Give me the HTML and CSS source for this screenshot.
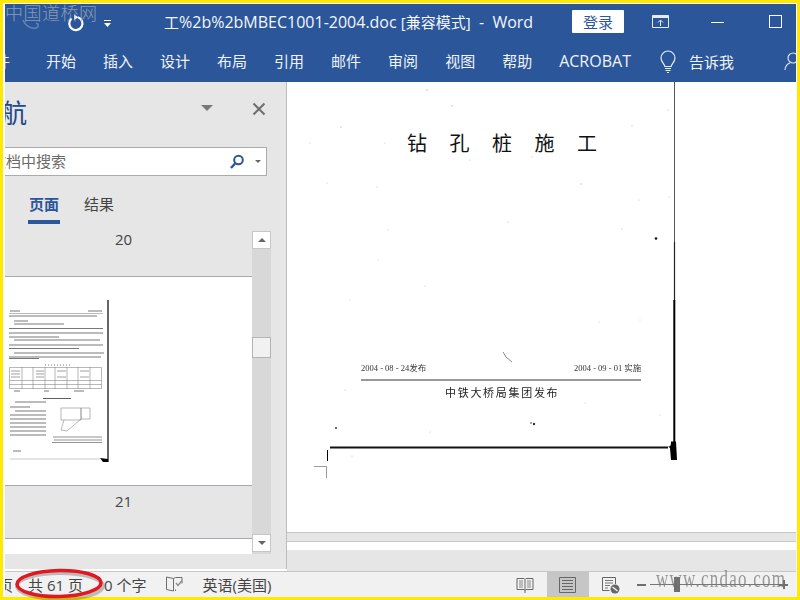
FILE: index.html
```html
<!DOCTYPE html>
<html lang="zh">
<head>
<meta charset="utf-8">
<title>Word</title>
<link rel="stylesheet" href="styles.css">
</head>
<body>
<div class="frame">
  <header class="titlebar">
    <svg class="ico-undo" width="20" height="20" viewBox="0 0 20 20"><path d="M5.500 5.500A6.600 6.600 0 1 0 12 4.200" fill="none" stroke="#fff" stroke-width="2.200"/><path d="M8 1.500l4.500 2.700L8 7z" fill="#fff"/></svg>
    <svg class="ico-qat" width="9" height="9" viewBox="0 0 9 9"><path d="M1 1.500h7" stroke="#fff" fill="none"/><path d="M1 4h7L4.500 8z" fill="#fff"/></svg>
    <div class="doc-title"><span class="cjk">工</span>%2b%2bMBEC1001-2004.doc <span class="cjk">[兼容模式]</span>&nbsp; -&nbsp; Word</div>
    <button class="login">登录</button>
    <svg class="ico-display" width="18" height="14" viewBox="0 0 18 14"><path d="M.5.500h16v12H.5z" fill="none" stroke="#e6ecf5"/><path d="M.5 2h16" stroke="#e6ecf5" stroke-width="2" fill="none"/><path d="M8.500 11V5.500M6 7.500l2.500-2.500 2.500 2.500" stroke="#e6ecf5" fill="none"/></svg>
    <span class="ico-min"></span>
    <span class="ico-max"></span>
  </header>
  <nav class="ribbon">
    <span class="tab tab-file">文件</span>
    <span class="tab">开始</span>
    <span class="tab">插入</span>
    <span class="tab">设计</span>
    <span class="tab">布局</span>
    <span class="tab">引用</span>
    <span class="tab">邮件</span>
    <span class="tab">审阅</span>
    <span class="tab">视图</span>
    <span class="tab">帮助</span>
    <span class="tab tab-latin">ACROBAT</span>
    <svg class="ico-bulb" width="18" height="24" viewBox="0 0 18 24"><path d="M5.800 16.500C5.500 13.500 2 12 2 8a7 7 0 0 1 14 0c0 4-3.500 5.500-3.800 8.500z" fill="none" stroke="#e6ecf5" stroke-width="1.200"/><path d="M6 18.500h6M6.500 20.500h5M8 22.500h2" stroke="#e6ecf5" stroke-width="1.200" fill="none"/></svg>
    <span class="tab tell">告诉我</span>
    <svg class="ico-person" width="16" height="20" viewBox="0 0 16 20"><circle cx="9" cy="6" r="5" fill="none" stroke="#d8e1ee" stroke-width="1.200"/><path d="M1 18c0-4 3-6.500 5-7" fill="none" stroke="#d8e1ee" stroke-width="1.200"/></svg>
  </nav>
  <main class="workspace">
    <aside class="nav">
      <div class="nav-head">
        <h1 class="nav-title">导航</h1>
        <span class="tri-down"></span>
        <svg class="ico-close" width="14" height="14" viewBox="0 0 14 14"><path d="M1.500 1.500l11 11M12.500 1.500l-11 11" stroke="#6e6e6e" stroke-width="2" fill="none"/></svg>
      </div>
      <div class="search">
        <span class="search-text">文档中搜索</span>
        <svg class="ico-search" width="16" height="16" viewBox="0 0 16 16"><circle cx="9.500" cy="6" r="4.300" fill="none" stroke="#2b579a" stroke-width="2"/><path d="M6.300 9.300L2 14" stroke="#2b579a" stroke-width="2.400" fill="none"/></svg>
        <span class="tri-small"></span>
      </div>
      <div class="nav-tabs">
        <span class="nav-tab active">页面</span>
        <span class="nav-tab">结果</span>
      </div>
      <div class="thumbs">
        <div class="thumb-list">
          <div class="page-num first">20</div>
          <div class="thumb-page">
            <svg class="thumb-img" width="104" height="163" viewBox="5 300 104 163">
              <rect x="5" y="300" width="104" height="163" fill="#fff"/>
              <g class="thumb-ink" stroke="#555" fill="none" stroke-width=".8">
                <path d="M10 311h10M88 311h14"/>
                <path d="M9 313.500h94" stroke="#aaa"/>
                <path d="M9 316h88M14 321h14M14 324h50M9 328.500h94M9 333h94M9 337h50M14 340h86M9 345h94M9 348.500h70M14 353h90M9 357h92M9 358.500h30"/>
                <path d="M45 365h25" stroke-dasharray="1 2"/>
                <path d="M9.500 367.500h92v21h-92zM9.500 380.500h92M9.500 384.500h92M22 367v22M33 367v22M45 367v22M55 367v22M67 367v22M78 367v22M90 367v22" stroke="#888" stroke-width=".6"/>
                <path d="M11 371h9M11 374h9M36 371h8M36 374h8M57 371h9M80 371h9M11 377h9M36 377h8M57 377h9M80 377h9" stroke="#888"/>
                <path d="M14 391h6M44 391h5M74 391h10"/>
                <path d="M43 398.500h28" stroke="#333"/>
                <path d="M15 402h31M10 407h20M15 411h31M10 415h36M10 419h36M10 423h36M10 427h36M10 431h36M10 435h36"/>
                <path d="M61 408h20v12H61zM81 408h9v11h-9zM64 420l-3 10 6 1 14-12" stroke="#888" stroke-width=".6"/>
                <path d="M53 437h49M54 440h48M52 442.500h50" stroke="#777"/>
                <path d="M13 451h8"/>
                <path d="M10 459h90" stroke="#bbb"/>
              </g>
              <path d="M108 300v162" stroke="#000" stroke-width="1.200"/>
              <path d="M100 458l8 1v3h-5z" fill="#000"/>
            </svg>
          </div>
          <div class="page-num second">21</div>
          <div class="thumb-next"></div>
        </div>
        <div class="scrollbar">
          <span class="sb-btn"><span class="tri-up"></span></span>
          <span class="sb-thumb"></span>
          <span class="sb-btn down"><span class="tri-small wide"></span></span>
        </div>
      </div>
    </aside>
    <section class="doc">
      <div class="scan">
        <svg class="scan-marks" width="513" height="450" viewBox="287 82 513 450">
          <path d="M674.500 82v160" stroke="#555" stroke-width="1" fill="none"/>
          <path d="M674.500 242v60" stroke="#222" stroke-width="1.200" fill="none"/>
          <path d="M674.300 300v145" stroke="#000" stroke-width="2" fill="none"/>
          <path d="M330 447.500C420 447 560 448 668 447.500" stroke="#111" stroke-width="2" fill="none"/>
          <path d="M668 446.500c3 0 3-2 3-5l5 0 1 18.500h-6l-1-12z" fill="#000"/>
          <path d="M327.500 450v11" stroke="#000" fill="none"/>
          <path d="M314 466.500h12.500V478" stroke="#9a9a9a" fill="none"/>
          <path d="M361 380h280" stroke="#333" stroke-width="1" fill="none"/>
          <path d="M503 352l3 5 6 5" stroke="#888" fill="none"/>
          <g fill="#bbb">
            <circle cx="656" cy="238.500" r="1.300" fill="#111"/>
            <circle cx="534" cy="424" r="1.200" fill="#333"/><circle cx="531" cy="423" r=".8" fill="#333"/>
            <circle cx="336" cy="428" r="1" fill="#333"/>
            <circle cx="427" cy="90" r=".7"/><circle cx="452" cy="106" r=".7"/><circle cx="341" cy="127" r=".7"/><circle cx="385" cy="143" r=".6"/>
            <circle cx="327" cy="183" r=".5"/><circle cx="377" cy="187" r=".6"/><circle cx="581" cy="184" r=".7"/><circle cx="532" cy="157" r=".6"/>
            <circle cx="470" cy="160" r=".6"/><circle cx="632" cy="126" r=".6"/><circle cx="668" cy="110" r=".6"/><circle cx="639" cy="200" r=".6"/>
            <circle cx="508" cy="222" r=".6"/><circle cx="669" cy="197" r=".5"/><circle cx="622" cy="229" r=".5"/><circle cx="388" cy="230" r=".5"/>
            <circle cx="640" cy="320" r=".5"/><circle cx="345" cy="390" r=".6"/><circle cx="585" cy="403" r=".5"/><circle cx="310" cy="143" r=".5"/>
            <circle cx="425" cy="286" r=".5"/><circle cx="599" cy="322" r=".5"/><circle cx="350" cy="300" r=".5"/><circle cx="378" cy="260" r=".5"/>
            <circle cx="352" cy="456" r=".6"/><circle cx="430" cy="432" r=".5"/><circle cx="660" cy="415" r=".5"/>
          </g>
        </svg>
        <span class="scan-title">钻孔桩施工</span>
        <span class="scan-date left">2004 - 08 - 24发布</span>
        <span class="scan-date right">2004 - 09 - 01 实施</span>
        <span class="scan-org">中铁大桥局集团发布</span>
      </div>
      <div class="hscroll"></div>
      <div class="doc-gap"></div>
      <div class="doc-foot"></div>
    </section>
  </main>
  <footer class="status">
    <span class="st-clip">页</span>
    <span class="st-pages">共 61 页</span>
    <span class="st-words">0 个字</span>
    <svg class="ico-proof" width="19" height="18" viewBox="0 0 19 18"><path d="M8.500 2.500L1.500 1v12.500l7 1.500zM8.500 2.500l2-1M10.500 1.500H17v6M10.500 13.500V15" fill="none" stroke="#6e6e6e"/><path d="M11 7l2 2.500 4-5" fill="none" stroke="#8a8a8a" stroke-width="1.300"/></svg>
    <span class="st-lang">英语(美国)</span>
    <span class="st-spacer"></span>
    <svg class="ico-read" width="18" height="18" viewBox="0 0 18 18"><path d="M1 2.500h7l1 1 1-1h7v11h-7l-1 1-1-1H1zM9 3.500V17" fill="none" stroke="#666"/><path d="M3 5h4M3 7h4M3 9h4M3 11h4M11 5h4M11 7h4M11 9h4M11 11h4" stroke="#888" fill="none"/></svg>
    <span class="view-active">
      <svg width="18" height="16" viewBox="0 0 18 16"><path d="M.5.500h16v15H.5z" fill="none" stroke="#666"/><path d="M3 3.500h11M3 6.500h11M3 9.500h11M3 12.500h11" stroke="#666" fill="none"/></svg>
    </span>
    <svg class="ico-web" width="18" height="18" viewBox="0 0 18 18"><path d="M13.500 8V1.500H.5v13h7" fill="none" stroke="#666"/><path d="M3 4.500h8M3 7h8M3 9.500h5M3 12h3" stroke="#777" fill="none"/><circle cx="13" cy="13" r="4.500" fill="#666"/><path d="M10.500 11l5 4" stroke="#f1f1f1" stroke-width="1.500"/></svg>
    <span class="zoom-minus"></span>
    <span class="zoom-track"><span class="zoom-knob"></span></span>
    <span class="zoom-plus"></span>
  </footer>
</div>
<div class="wm-top">中国道桥网</div>
<svg class="wm-swirl" width="20" height="12" viewBox="0 0 20 12"><path d="M1 1c2 6 8 9 13 8 3-1 3-4 0-5" fill="none" stroke="#8ea0bd" stroke-opacity=".6" stroke-width="1.500"/></svg>
<div class="wm-bottom">www.cndao.com</div>
<svg class="ring" width="96" height="38" viewBox="0 0 96 38">
  <ellipse cx="45" cy="20" rx="43" ry="13" fill="none" stroke="#555" stroke-opacity=".35" stroke-width="4"/>
  <ellipse cx="44" cy="17.500" rx="42" ry="13" fill="none" stroke="#e01820" stroke-width="3.500" transform="rotate(-1 44 17)"/>
</svg>
</body>
</html>
```

FILE: styles.css
```css
* { box-sizing: border-box; }
html, body { margin: 0; padding: 0; }
body {
  position: relative;
  width: 800px;
  height: 600px;
  overflow: hidden;
  background: #fff;
  font-family: "Open Sans", "Noto Sans CJK SC", sans-serif;
}
.frame {
  width: 800px;
  height: 600px;
  border: 3px solid #ffe900;
  padding: 1px 1px 0 2px;
  display: flex;
  flex-direction: column;
  overflow: hidden;
  background: #fff;
}
.titlebar {
  height: 37px;
  flex: none;
  background: #2b579a;
  display: flex;
  align-items: center;
  color: #fff;
  position: relative;
}
.ico-undo { margin: 1px 0 0 61px; flex: none; }
.ico-qat { margin: 1px 0 0 17px; flex: none; }
.doc-title {
  margin-left: 52px;
  width: 396px;
  font-size: 16px;
  white-space: pre;
  color: #f4f6fa;
  flex: none;
  line-height: 20px;
  margin-top: -2px;
}
.cjk { font-size: 15px; }
.login {
  width: 52px;
  height: 23px;
  margin: -2px 0 0 12px;
  padding: 0;
  border: 0;
  border-radius: 1px;
  background: #fff;
  color: #2b579a;
  font: 15px "Noto Sans CJK SC", sans-serif;
  flex: none;
}
.ico-display { margin: -2px 0 0 28px; flex: none; }
.ico-min {
  width: 13px;
  height: 1px;
  background: #fff;
  margin: 0 0 0 41px;
  flex: none;
}
.ico-max {
  width: 13px;
  height: 13px;
  border: 1px solid #fff;
  margin: -2px 0 0 45px;
  flex: none;
}
.ribbon {
  height: 41px;
  flex: none;
  background: #2b579a;
  display: flex;
  align-items: center;
  gap: 27px;
  color: #f0f3f8;
  font-size: 15px;
  overflow: hidden;
  padding-bottom: 1px;
}
.tab { flex: none; line-height: 20px; white-space: nowrap; }
.tab-latin { font-size: 16px; }
.tab-file { margin-left: -25px; margin-right: 9px; }
.ico-bulb { flex: none; margin-left: 1px; margin-top: 2px; }
.tell { margin-left: -15px; margin-top: 2px; }
.ico-person { flex: none; margin-left: 23px; margin-top: 2px; }
.workspace {
  height: 489px;
  flex: none;
  display: flex;
}
.nav {
  width: 282px;
  flex: none;
  background: #e6e6e6;
  border-right: 1px solid #bcbcbc;
  display: flex;
  flex-direction: column;
  overflow: hidden;
  margin-bottom: 2px;
}
.nav-head {
  height: 65px;
  flex: none;
  display: flex;
  align-items: flex-start;
}
.nav-title {
  margin: 12px 0 0 -30px;
  width: 52px;
  font: 400 26px/36px "Noto Sans CJK SC", sans-serif;
  color: #21498a;
  flex: none;
}
.tri-down {
  width: 0;
  height: 0;
  border-style: solid;
  border-width: 6px 6px 0;
  border-color: #7a7a7a transparent transparent;
  margin: 23px 0 0 174px;
  flex: none;
}
.ico-close { margin: 20px 0 0 39px; flex: none; }
.search {
  height: 29px;
  width: 262px;
  flex: none;
  background: #fff;
  border: 1px solid #ababab;
  border-left: 0;
  display: flex;
  align-items: center;
  overflow: hidden;
}
.search-text {
  margin: -2px 0 0 -14px;
  width: 75px;
  font-size: 15px;
  color: #6a6a6a;
  flex: none;
  white-space: nowrap;
}
.ico-search { margin-left: 163px; flex: none; }
.tri-small {
  width: 0;
  height: 0;
  border-style: solid;
  border-width: 3px 3px 0;
  border-color: #666 transparent transparent;
  margin-left: 10px;
  flex: none;
}
.nav-tabs {
  height: 55px;
  flex: none;
  padding-left: 23px;
  display: flex;
  gap: 24px;
}
.nav-tab {
  margin-top: 18px;
  height: 30px;
  font-size: 15px;
  line-height: 20px;
  color: #444;
}
.nav-tab.active {
  color: #2b579a;
  font-weight: 700;
  width: 32px;
  text-align: center;
  border-bottom: 4px solid #2b579a;
  padding-bottom: 6px;
  height: 30px;
}
.thumbs {
  flex: 1;
  min-height: 0;
  display: flex;
  padding-bottom: 15px;
}
.thumb-list {
  width: 247px;
  flex: none;
  display: flex;
  flex-direction: column;
  overflow: hidden;
  background: #fff;
}
.page-num {
  text-align: center;
  font-size: 15px;
  color: #444;
  background: #e6e6e6;
  flex: none;
  padding-right: 10px;
}
.page-num.first {
  height: 46px;
  line-height: 16px;
  border-bottom: 1px solid #a2a9b3;
}
.page-num.second {
  height: 54px;
  padding-top: 6px;
  line-height: 18px;
  border-top: 1px solid #a2a9b3;
  border-bottom: 1px solid #a2a9b3;
}
.thumb-page {
  height: 208px;
  flex: none;
  padding-top: 23px;
}
.thumb-img { display: block; }
.thumb-ink { filter: blur(.5px); }
.thumb-next { flex: 1; }
.scrollbar {
  width: 19px;
  flex: none;
  background: #d8d8d8;
  display: flex;
  flex-direction: column;
  align-items: stretch;
}
.sb-btn {
  height: 18px;
  flex: none;
  background: #fff;
  border: 1px solid #c6c6c6;
  display: flex;
  align-items: center;
  justify-content: center;
}
.sb-btn.down { margin-top: 176px; }
.tri-up {
  width: 0;
  height: 0;
  border-style: solid;
  border-width: 0 4px 4px;
  border-color: transparent transparent #666;
}
.tri-small.wide {
  border-width: 4px 4px 0;
  margin: 0;
}
.sb-thumb {
  height: 21px;
  flex: none;
  margin-top: 88px;
  background: #f1f1f1;
  border: 1px solid #b4b4b4;
}
.doc {
  flex: 1;
  min-width: 0;
  display: flex;
  flex-direction: column;
}
.scan {
  height: 450px;
  flex: none;
  position: relative;
  background: #fff;
  overflow: hidden;
}
.scan-marks { display: block; }
.scan-title {
  position: absolute;
  left: 120px;
  top: 47px;
  font: 20px/28px "Noto Sans CJK SC", sans-serif;
  letter-spacing: 22.500px;
  color: #111;
  white-space: nowrap;
}
.scan-date {
  position: absolute;
  top: 280px;
  font: 8.500px/12px "Liberation Serif", "Noto Sans CJK SC", serif;
  color: #333;
  white-space: nowrap;
  filter: blur(.25px);
}
.scan-date.left { left: 74px; }
.scan-date.right { left: 287px; }
.scan-org {
  position: absolute;
  left: 158px;
  top: 302px;
  font: 11px/16px "Noto Sans CJK SC", sans-serif;
  letter-spacing: 1.700px;
  color: #222;
  white-space: nowrap;
  filter: blur(.2px);
}
.hscroll {
  height: 10px;
  flex: none;
  background: #e6e6e6;
  border-top: 1px solid #c6c6c6;
  border-bottom: 1px solid #c6c6c6;
}
.doc-gap { height: 8px; flex: none; background: #fff; }
.doc-foot { flex: 1; background: #e6e6e6; }
.status {
  height: 26px;
  flex: none;
  background: #f1f1f1;
  border-top: 1px solid #c6c6c6;
  display: flex;
  align-items: center;
  font-size: 15px;
  color: #444;
  overflow: hidden;
}
.status > span { flex: none; white-space: nowrap; }
.st-clip { margin-left: -7px; }
.st-pages { margin-left: 15px; }
.st-words { margin-left: 21px; }
.ico-proof { margin-left: 19px; flex: none; }
.st-lang { margin-left: 18px; }
.status > .st-spacer { flex: 1; }
.ico-read { flex: none; margin-right: 13px; }
.view-active {
  width: 42px;
  height: 25px;
  background: #c6c6c6;
  display: flex;
  align-items: center;
  justify-content: center;
  margin-right: 13px;
}
.ico-web { flex: none; }
.zoom-minus {
  width: 9px;
  height: 2px;
  background: #6e6e6e;
  margin-left: 17px;
}
.zoom-track {
  width: 129px;
  height: 1px;
  background: #777;
  margin-left: 4px;
  position: relative;
}
.zoom-knob {
  position: absolute;
  left: 24px;
  top: -7px;
  width: 6px;
  height: 15px;
  background: #6e6e6e;
}
.zoom-plus {
  width: 9px;
  height: 9px;
  margin: 0 8px 0 0;
  background:
    linear-gradient(#6e6e6e, #6e6e6e) center / 100% 2px no-repeat,
    linear-gradient(#6e6e6e, #6e6e6e) center / 2px 100% no-repeat;
}
.wm-top {
  position: absolute;
  left: 5px;
  top: -1px;
  font: 300 18px/26px "Noto Sans CJK SC", sans-serif;
  letter-spacing: .5px;
  color: rgba(165, 172, 180, .8);
  white-space: nowrap;
}
.wm-swirl {
  position: absolute;
  left: 22px;
  top: 19px;
}
.wm-bottom {
  position: absolute;
  left: 656px;
  top: 567px;
  font: 17px/24px "Liberation Serif", serif;
  letter-spacing: 1.250px;
  color: rgba(120, 120, 120, .75);
  white-space: nowrap;
  transform: scaleY(1.5);
}
.ring {
  position: absolute;
  left: 15px;
  top: 566px;
}
```
